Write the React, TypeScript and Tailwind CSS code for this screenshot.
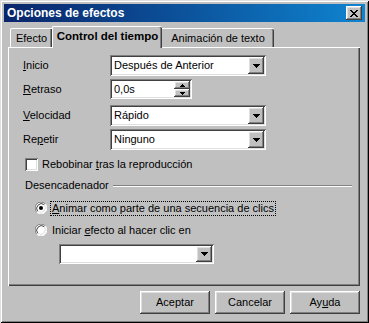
import { ReactNode } from "react";

const raised =
  "shadow-[inset_-1px_-1px_#404040,inset_1px_1px_#ffffff,inset_-2px_-2px_#808080,inset_2px_2px_#dfdfdf]";
const sunken =
  "shadow-[inset_1px_1px_#808080,inset_-1px_-1px_#ffffff,inset_2px_2px_#404040,inset_-2px_-2px_#dfdfdf]";

function Arrow({ small = false }: { small?: boolean }) {
  return small ? (
    <svg width="5" height="3" viewBox="0 0 5 3">
      <path d="M0 0h5v1H0zM1 1h3v1H1zM2 2h1v1H2z" fill="#000" />
    </svg>
  ) : (
    <svg width="7" height="4" viewBox="0 0 7 4">
      <path d="M0 0h7v1H0zM1 1h5v1H1zM2 2h3v1H2zM3 3h1v1H3z" fill="#000" />
    </svg>
  );
}

function Combo({ value, className }: { value: string; className: string }) {
  return (
    <div className={`flex bg-white p-[2px] ${sunken} ${className}`}>
      <div className="flex-1 flex items-center pl-[2px] whitespace-nowrap overflow-hidden">{value}</div>
      <div className={`w-[16px] flex items-center justify-center bg-[#c0c0c0] ${raised}`}>
        <Arrow />
      </div>
    </div>
  );
}

function Spin({ value }: { value: string }) {
  return (
    <div className={`flex h-[20px] w-[82px] bg-white p-[2px] ${sunken}`}>
      <div className="flex-1 flex items-center pl-[2px]">{value}</div>
      <div className="w-[16px] flex flex-col">
        <div className={`flex-1 flex items-center justify-center bg-[#c0c0c0] ${raised}`}>
          <span className="rotate-180 flex">
            <Arrow small />
          </span>
        </div>
        <div className={`flex-1 flex items-center justify-center bg-[#c0c0c0] ${raised}`}>
          <Arrow small />
        </div>
      </div>
    </div>
  );
}

function Radio({ checked }: { checked?: boolean }) {
  return (
    <svg width="12" height="12" viewBox="0 0 12 12" className="shrink-0">
      <circle cx="6" cy="6" r="5.5" fill="#ffffff" />
      <path d="M10.2 1.8 A5.9 5.9 0 0 0 1.8 10.2" stroke="#808080" strokeWidth="1" fill="none" />
      <path d="M9.3 2.7 A4.7 4.7 0 0 0 2.7 9.3" stroke="#404040" strokeWidth="1" fill="none" />
      <path d="M10.2 1.8 A5.9 5.9 0 0 1 1.8 10.2" stroke="#ffffff" strokeWidth="1" fill="none" />
      <path d="M9.3 2.7 A4.7 4.7 0 0 1 2.7 9.3" stroke="#dfdfdf" strokeWidth="1" fill="none" />
      {checked && <circle cx="6" cy="6" r="2" fill="#000" />}
    </svg>
  );
}

function Label({ children }: { children: ReactNode }) {
  return <div className="w-[87px] shrink-0">{children}</div>;
}

function Button({ children }: { children: ReactNode }) {
  return (
    <div className={`w-[70px] h-[23px] flex items-center justify-center bg-[#c0c0c0] ${raised}`}>
      {children}
    </div>
  );
}

export default function App() {
  return (
    <div
      className="w-[369px] h-[323px] bg-[#c0c0c0] p-[4px] flex flex-col text-[11px] leading-[13px] text-black font-['Liberation_Sans',Arial,sans-serif] shadow-[inset_1px_1px_#dfdfdf,inset_-1px_-1px_#000000,inset_2px_2px_#ffffff,inset_-2px_-2px_#808080]"
    >
      {/* barra de título */}
      <div className="h-[18px] flex items-center bg-gradient-to-r from-[#0a246a] to-[#1084d0] pl-[3px] pr-[3px]">
        <span className="flex-1 text-white font-bold text-[12px]">Opciones de efectos</span>
        <div className={`w-[16px] h-[14px] flex items-center justify-center bg-[#c0c0c0] ${raised}`}>
          <svg width="8" height="7" viewBox="0 0 8 7">
            <path
              d="M0 0h2v1H0zM6 0h2v1H6zM1 1h2v1H1zM5 1h2v1H5zM2 2h4v1H2zM3 3h2v1H3zM2 4h4v1H2zM1 5h2v1H1zM5 5h2v1H5zM0 6h2v1H0zM6 6h2v1H6z"
              fill="#000"
            />
          </svg>
        </div>
      </div>

      {/* pestañas */}
      <div className="ml-[4px] mt-[4px] flex items-end pl-[2px]">
        <div className="w-[42px] h-[19px] flex items-center justify-center border-l border-t border-white rounded-tl-[2px] shadow-[inset_-1px_0_#404040,inset_-2px_0_#808080]">
          Efecto
        </div>
        <div className="relative z-10 w-[110px] h-[22px] -mb-[1px] bg-[#c0c0c0] flex items-center justify-center pb-[2px] border-l border-t border-white rounded-t-[2px] font-bold text-[11.5px] shadow-[inset_-1px_0_#404040,inset_-2px_0_#808080]">
          Control del tiempo
        </div>
        <div className="w-[112px] h-[19px] flex items-center justify-center border-t border-white rounded-tr-[2px] shadow-[inset_-1px_0_#404040,inset_-2px_0_#808080]">
          Animación de texto
        </div>
      </div>

      {/* panel */}
      <div className="ml-[4px] w-[352px] h-[239px] flex flex-col pl-[15px] pr-[8px] pt-[8px] shadow-[inset_1px_1px_#ffffff,inset_-1px_-1px_#404040,inset_-2px_-2px_#808080]">
        <div className="h-[21px] flex items-center">
          <Label>
            <u>I</u>nicio
          </Label>
          <Combo value="Después de Anterior" className="w-[156px] h-[21px]" />
        </div>
        <div className="mt-[3px] h-[20px] flex items-center">
          <Label>
            <u>R</u>etraso
          </Label>
          <Spin value="0,0s" />
        </div>
        <div className="mt-[6px] h-[21px] flex items-center">
          <Label>
            <u>V</u>elocidad
          </Label>
          <Combo value="Rápido" className="w-[156px] h-[21px]" />
        </div>
        <div className="mt-[3px] h-[21px] flex items-center">
          <Label>
            Re<u>p</u>etir
          </Label>
          <Combo value="Ninguno" className="w-[156px] h-[21px]" />
        </div>

        <div className="mt-[8px] h-[13px] flex items-center pl-[2px]">
          <div className={`w-[13px] h-[13px] bg-white ${sunken}`} />
          <span className="ml-[4px]">
            Rebobinar <u>t</u>ras la reproducción
          </span>
        </div>

        <div className="mt-[8px] h-[13px] flex items-center pl-[2px]">
          <span>Desencadenador</span>
          <div className="flex-1 ml-[4px] h-[2px] border-t border-[#808080] border-b border-b-white" />
        </div>

        <div className="mt-[9px] h-[14px] flex items-center pl-[12px]">
          <Radio checked />
          <span className="ml-[3px] px-[1px] border border-dotted border-black">
            <u>A</u>nimar como parte de una secuencia de clics
          </span>
        </div>
        <div className="mt-[8px] h-[14px] flex items-center pl-[12px]">
          <Radio />
          <span className="ml-[5px]">
            Iniciar <u>e</u>fecto al hacer clic en
          </span>
        </div>

        <div className="mt-[7px] pl-[36px]">
          <Combo value="" className="w-[155px] h-[20px]" />
        </div>
      </div>

      {/* botones */}
      <div className="ml-[4px] w-[352px] mt-[5px] flex justify-end gap-[5px]">
        <Button>Aceptar</Button>
        <Button>Cancelar</Button>
        <Button>
          Ay<u>u</u>da
        </Button>
      </div>
    </div>
  );
}
